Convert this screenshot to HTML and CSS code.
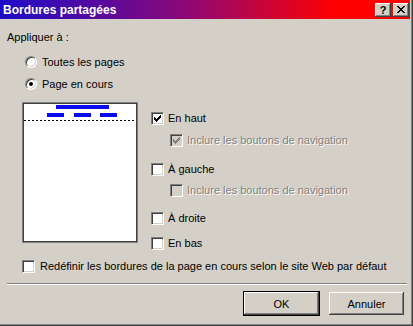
FILE: index.html
```html
<!DOCTYPE html>
<html>
<head>
  <meta charset="UTF-8">
  <title>Bordures partagées</title>
  <link rel="stylesheet" href="styles.css">
</head>
<body>
  <div class="window">
    <div class="titlebar">
      <span class="title">Bordures partagées</span>
      <div class="caption-btns">
        <span class="cap-btn">?</span>
        <span class="cap-btn">
          <svg width="8" height="7" viewBox="0 0 8 7" shape-rendering="crispEdges">
            <path d="M0 0h2v1h-2z M1 1h2v1h-2z M2 2h4v1h-4z M3 3h2v1h-2z M2 4h4v1h-4z M1 5h2v1h-2z M0 6h2v1h-2z M6 0h2v1h-2z M5 1h2v1h-2z M5 5h2v1h-2z M6 6h2v1h-2z" fill="#000"/>
          </svg>
        </span>
      </div>
    </div>

    <div class="dialog">
      <div class="group-label">Appliquer à :</div>
      <div class="radios">
        <div class="radio-row"><span class="radio"></span>Toutes les pages</div>
        <div class="radio-row"><span class="radio checked"></span>Page en cours</div>
      </div>

      <div class="main">
        <div class="preview">
          <svg width="112" height="137" viewBox="0 0 112 137" shape-rendering="crispEdges">
            <rect x="32" y="1" width="53" height="4" fill="#0a0af0"/>
            <rect x="23" y="9" width="17" height="4" fill="#0a0af0"/>
            <rect x="50" y="9" width="17" height="4" fill="#0a0af0"/>
            <rect x="76" y="9" width="17" height="4" fill="#0a0af0"/>
            <line x1="0" y1="16.5" x2="112" y2="16.5" stroke="#000" stroke-width="1" stroke-dasharray="2 2"/>
          </svg>
        </div>

        <div class="options">
          <div class="check-row"><span class="check checked"><svg width="7" height="7" viewBox="0 0 7 7" shape-rendering="crispEdges"><path d="M0 2h1v3h-1z M1 3h1v3h-1z M2 4h1v3h-1z M3 3h1v3h-1z M4 2h1v3h-1z M5 1h1v3h-1z M6 0h1v3h-1z"/></svg></span>En haut</div>
          <div class="check-row sub disabled"><span class="check checked"><svg width="7" height="7" viewBox="0 0 7 7" shape-rendering="crispEdges"><path d="M0 2h1v3h-1z M1 3h1v3h-1z M2 4h1v3h-1z M3 3h1v3h-1z M4 2h1v3h-1z M5 1h1v3h-1z M6 0h1v3h-1z"/></svg></span>Inclure les boutons de navigation</div>
          <div class="check-row after-sub"><span class="check"></span>À gauche</div>
          <div class="check-row sub tight disabled"><span class="check"></span>Inclure les boutons de navigation</div>
          <div class="check-row after-sub tight"><span class="check"></span>À droite</div>
          <div class="check-row after-main"><span class="check"></span>En bas</div>
        </div>
      </div>

      <div class="check-row reset"><span class="check"></span>Redéfinir les bordures de la page en cours selon le site Web par défaut</div>

      <div class="separator"></div>

      <div class="buttons">
        <button class="btn default">OK</button>
        <button class="btn">Annuler</button>
      </div>
    </div>
  </div>
</body>
</html>
```

FILE: styles.css
```css
body {
  margin: 0;
  font-family: "Liberation Sans", Arial, sans-serif;
  font-size: 11px;
  color: #000;
  background: #d4d0c8;
}

.window {
  width: 413px;
  height: 326px;
  box-sizing: border-box;
  padding-right: 3px;
  background: #d4d0c8;
  box-shadow: inset -1px -1px #404040, inset -2px -2px #808080;
  overflow: hidden;
}

/* title bar */

.titlebar {
  height: 19px;
  display: flex;
  align-items: center;
  justify-content: space-between;
  background: linear-gradient(to right, #1c0cc8 0%, #8c0878 45%, #ff0000 82%);
  padding-left: 3px;
  padding-right: 1px;
}

.title {
  color: #fff;
  font-weight: bold;
  font-size: 12px;
}

.caption-btns {
  display: flex;
  gap: 2px;
}

.cap-btn {
  width: 16px;
  height: 14px;
  box-sizing: border-box;
  background: #d4d0c8;
  box-shadow: inset -1px -1px #404040, inset 1px 1px #fff, inset -2px -2px #808080;
  display: flex;
  align-items: center;
  justify-content: center;
  font-weight: bold;
  font-size: 11px;
  line-height: 14px;
}

/* body */

.dialog {
  padding-left: 7px;
}

.group-label {
  margin-top: 11px;
  line-height: 14px;
}

.radios {
  margin-top: 7px;
  padding-left: 18px;
}

.radio-row {
  height: 22px;
  display: flex;
  align-items: center;
}

.radio {
  width: 12px;
  height: 12px;
  box-sizing: border-box;
  border-radius: 50%;
  background: #fff;
  border: 1px solid;
  border-color: #808080 #fff #fff #808080;
  box-shadow: inset 1px 1px #404040, inset -1px -1px #d4d0c8;
  margin-right: 5px;
  display: flex;
  align-items: center;
  justify-content: center;
}

.radio.checked::after {
  content: "";
  width: 4px;
  height: 4px;
  border-radius: 50%;
  background: #000;
}

.main {
  margin-top: 7px;
  padding-left: 15px;
  display: grid;
  grid-template-columns: 116px 1fr;
  align-items: start;
  column-gap: 13px;
}

.preview {
  height: 141px;
  box-sizing: border-box;
  background: #fff;
  border: 1px solid #808080;
  box-shadow: inset 0 0 0 1px #404040;
  padding: 1px;
}

.preview svg {
  display: block;
}

.options {
  padding-top: 9px;
}

.check-row {
  height: 14px;
  line-height: 14px;
  display: flex;
  align-items: center;
  white-space: nowrap;
}

.check {
  width: 13px;
  height: 13px;
  flex: none;
  box-sizing: border-box;
  background: #fff;
  border: 1px solid;
  border-color: #808080 #fff #fff #808080;
  box-shadow: inset 1px 1px #404040, inset -1px -1px #d4d0c8;
  margin-right: 4px;
  display: flex;
  align-items: center;
  justify-content: center;
}

.check svg {
  fill: #000;
}

.check-row.sub {
  margin-top: 8px;
  padding-left: 19px;
}

.check-row.after-sub {
  margin-top: 15px;
}

.check-row.sub.tight {
  margin-top: 7px;
}

.check-row.after-sub.tight {
  margin-top: 14px;
}

.check-row.after-main {
  margin-top: 11px;
}

.check-row.disabled {
  color: #808080;
  text-shadow: 1px 1px 0 #fff;
}

.check-row.disabled .check {
  background: #d4d0c8;
}

.check-row.disabled .check svg {
  fill: #808080;
}

.check-row.reset {
  margin-top: 9px;
  padding-left: 15px;
}

.check-row.reset .check {
  margin-right: 5px;
}

.separator {
  margin-top: 10px;
  margin-right: 3px;
  border-top: 1px solid #808080;
  border-bottom: 1px solid #fff;
}

.buttons {
  margin-top: 7px;
  display: flex;
  justify-content: flex-end;
  gap: 9px;
  padding-right: 6px;
}

.btn {
  width: 75px;
  height: 23px;
  box-sizing: border-box;
  font-family: "Liberation Sans", Arial, sans-serif;
  font-size: 11px;
  color: #000;
  background: #d4d0c8;
  border: none;
  padding: 0;
  box-shadow: inset -1px -1px #404040, inset 1px 1px #fff, inset -2px -2px #808080, inset 2px 2px #d4d0c8;
}

.btn.default {
  width: 77px;
  height: 25px;
  margin-top: -1px;
  border: 1px solid #000;
}
```
